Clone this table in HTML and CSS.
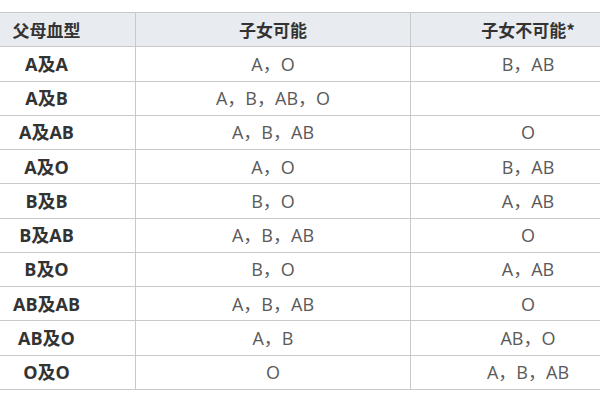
FILE: index.html
```html
<!DOCTYPE html>
<html lang="zh-CN">
<head>
<meta charset="utf-8">
<link rel="stylesheet" href="styles.css">
</head>
<body>
<div class="wrap">
<table class="blood">
  <colgroup><col class="c1"><col class="c2"><col class="c3"></colgroup>
  <thead>
    <tr><th class="first">父母血型</th><th>子女可能</th><th>子女不可能*</th></tr>
  </thead>
  <tbody>
    <tr><td class="first">A及A</td><td>A，O</td><td>B，AB</td></tr>
    <tr><td class="first">A及B</td><td>A，B，AB，O</td><td></td></tr>
    <tr><td class="first">A及AB</td><td>A，B，AB</td><td>O</td></tr>
    <tr><td class="first">A及O</td><td>A，O</td><td>B，AB</td></tr>
    <tr><td class="first">B及B</td><td>B，O</td><td>A，AB</td></tr>
    <tr><td class="first">B及AB</td><td>A，B，AB</td><td>O</td></tr>
    <tr><td class="first">B及O</td><td>B，O</td><td>A，AB</td></tr>
    <tr><td class="first">AB及AB</td><td>A，B，AB</td><td>O</td></tr>
    <tr><td class="first">AB及O</td><td>A，B</td><td>AB，O</td></tr>
    <tr><td class="first">O及O</td><td>O</td><td>A，B，AB</td></tr>
  </tbody>
</table>
</div>
</body>
</html>
```
FILE: styles.css
```css
html, body {
  margin: 0;
  padding: 0;
  background: #ffffff;
  overflow: hidden;
}
.wrap {
  width: 600px;
  height: 400px;
  overflow: hidden;
  padding-top: 12px;
  box-sizing: border-box;
}
.blood {
  border-collapse: collapse;
  table-layout: fixed;
  width: 688px;
  margin-left: -43px;
  font-family: "Open Sans", "Noto Sans CJK SC", sans-serif;
  font-size: 18px;
  color: #5a5a5a;
}
.c1 { width: 178px; }
.c2 { width: 275px; }
.c3 { width: 235px; }
.blood th, .blood td {
  border: 1px solid #c9c9c9;
  height: 33.27px;
  padding: 0;
  text-align: center;
  vertical-align: middle;
  line-height: 20px;
}
.blood thead th {
  background: #e8ebef;
  color: #333;
  font-weight: bold;
  font-family: "Noto Sans CJK SC", sans-serif;
  font-size: 17px;
}
.blood td.first {
  font-weight: bold;
  color: #333;
}
```
